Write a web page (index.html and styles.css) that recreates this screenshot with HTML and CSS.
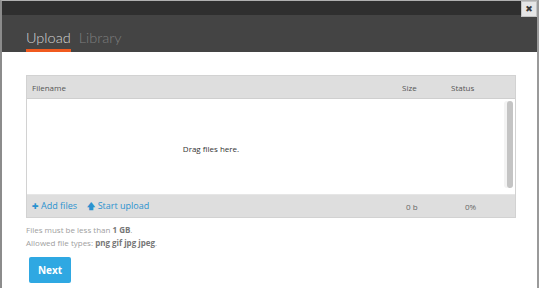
FILE: index.html
```html
<!DOCTYPE html>
<html lang="en">
<head>
    <meta charset="UTF-8">
    <title>Upload</title>
    <link rel="stylesheet" href="styles.css">
</head>
<body>
<div class="dialog">
    <div class="titlebar">
        <span class="close">&#10006;</span>
    </div>
    <div class="tabs">
        <a class="tab active">Upload</a>
        <a class="tab">Library</a>
    </div>
    <div class="content">
        <div class="uploader">
            <div class="row head">
                <span class="col-name">Filename</span>
                <span class="col-size">Size</span>
                <span class="col-status">Status</span>
            </div>
            <div class="drop">
                <span>Drag files here.</span>
                <div class="scroll"></div>
            </div>
            <div class="row foot">
                <span class="col-name">
                    <a class="action"><b>&#10010;</b> Add files</a>
                    <a class="action"><b>&#129093;</b> Start upload</a>
                </span>
                <span class="col-size">0 b</span>
                <span class="col-status">0%</span>
            </div>
        </div>
        <p class="note">Files must be less than <strong>1 GB</strong>.</p>
        <p class="note">Allowed file types: <strong>png gif jpg jpeg</strong>.</p>
        <button class="btn">Next</button>
    </div>
</div>
</body>
</html>
```

FILE: styles.css
```css
body {
    margin: 0;
    background: #fff;
    font-family: "Open Sans", "DejaVu Sans", sans-serif;
}

.dialog {
    width: 535px;
    height: 287px;
    border-left: 2px solid #8c8c8c;
    border-right: 2px solid #9a9a9a;
    border-top: 1px solid #b0b0b0;
    background: #fff;
}

.titlebar {
    position: relative;
    height: 14px;
    background: #2f2f2f;
}

.close {
    position: absolute;
    right: 0;
    top: 0;
    width: 16px;
    height: 16px;
    background: #e6e6e6;
    border: 1px solid #c4c4c4;
    box-sizing: border-box;
    color: #3a3a3a;
    font-size: 9px;
    line-height: 14px;
    text-align: center;
    z-index: 1;
}

.tabs {
    height: 37px;
    background: #444;
    padding-left: 24px;
    display: flex;
    align-items: flex-end;
    gap: 8px;
}

.tab {
    font-family: "Lato", "Liberation Sans", sans-serif;
    font-weight: 300;
    font-size: 14.5px;
    color: #7d7d7d;
    padding-bottom: 2px;
    border-bottom: 3px solid transparent;
    line-height: 18px;
}

.tab.active {
    color: #d4d4d4;
    border-bottom-color: #f05a1f;
}

.content {
    padding: 23px 21px 0 24px;
}

.uploader {
    border: 1px solid #d2d2d2;
    font-size: 8px;
}

.row {
    display: flex;
    align-items: center;
    height: 22px;
    background: #dedede;
    color: #555;
}

.col-name {
    flex: 1;
    padding-left: 5px;
}

.col-size {
    width: 46px;
    padding-left: 4px;
}

.col-status {
    width: 64px;
    padding-left: 3px;
}

.drop {
    position: relative;
    height: 97px;
    border-top: 1px solid #cfcfcf;
    border-bottom: 1px solid #e6e6e6;
    display: flex;
    align-items: center;
    justify-content: center;
    color: #333;
    padding: 3px 120px 0 0;
    box-sizing: border-box;
}

.scroll {
    position: absolute;
    right: 2px;
    top: 2px;
    width: 6px;
    height: 87px;
    background: #c4c4c4;
    border-radius: 3px;
    box-shadow: -3px 0 0 #f3f3f3;
}

.foot {
    height: 22px;
    font-size: 9px;
}

.foot .col-size,
.foot .col-status {
    color: #666;
    font-size: 8px;
}

.foot .col-size {
    width: 42px;
    padding-left: 8px;
}

.foot .col-status {
    width: 50px;
    padding-left: 17px;
}

.action {
    color: #2a92cf;
    margin-right: 8px;
}

.action b {
    font-size: 8px;
}

.note {
    margin: 6px 0 0 0;
    font-size: 8px;
    color: #a0a0a0;
}

.note + .note {
    margin-top: 2px;
}

.note strong {
    color: #777;
}

.btn {
    margin: 9px 0 0 3px;
    width: 42px;
    height: 26px;
    background: #2fa8e2;
    border: none;
    border-radius: 2px;
    color: #fff;
    font-family: "Open Sans", sans-serif;
    font-weight: bold;
    font-size: 10px;
}
```
